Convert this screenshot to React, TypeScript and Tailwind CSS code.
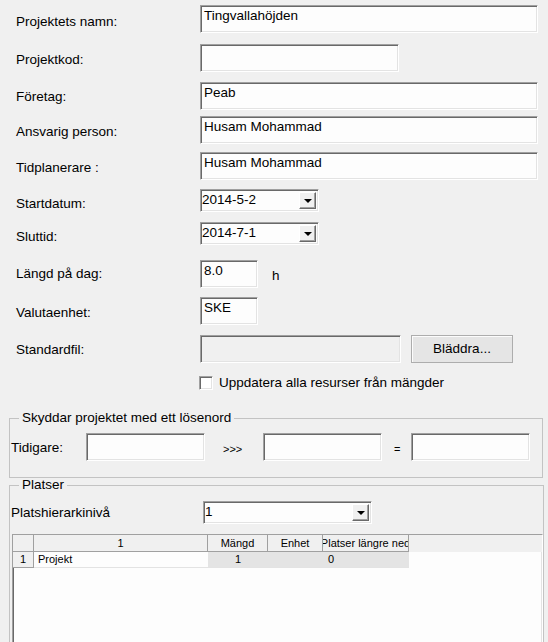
import React from 'react'

const sunken =
  'border border-t-[#a0a0a0] border-l-[#a0a0a0] border-b-white border-r-white shadow-[inset_1px_1px_0_#696969,inset_-1px_-1px_0_#e3e3e3]'

function TextBox({ w, value, disabled }: { w: string; value?: string; disabled?: boolean }) {
  return (
    <div
      className={`${w} h-[28px] shrink-0 pl-[3px] pt-[2px] leading-[16px] ${sunken} ${
        disabled ? 'bg-[#f0f0f0]' : 'bg-[#fdfdfd]'
      }`}
    >
      {value}
    </div>
  )
}

function Combo({ w, value }: { w: string; value: string }) {
  return (
    <div className={`${w} flex h-[23px] shrink-0 items-start bg-[#fdfdfd] ${sunken}`}>
      <span className="flex-1 pl-[1px] pt-[2px] leading-[16px]">{value}</span>
      <div className="mr-[2px] mt-[2px] flex h-[17px] w-[17px] items-center justify-center border border-t-white border-l-white border-b-[#696969] border-r-[#696969] bg-[#f0f0f0] shadow-[inset_-1px_-1px_0_#a0a0a0]">
        <div className="h-0 w-0 border-x-[4px] border-t-[4px] border-x-transparent border-t-black" />
      </div>
    </div>
  )
}

function Row({
  label,
  mt,
  lt,
  children,
}: {
  label: string
  mt: string
  lt: string
  children: React.ReactNode
}) {
  return (
    <div className={`flex items-start ${mt}`}>
      <span className={`w-[200px] shrink-0 pl-[16px] leading-[16px] ${lt}`}>{label}</span>
      {children}
    </div>
  )
}

export default function App() {
  return (
    <div
      className="relative h-[642px] w-[548px] overflow-hidden bg-[#f0f0f0] text-[13.5px] text-black"
      style={{ fontFamily: '"Liberation Sans", Arial, sans-serif' }}
    >
      <div className="flex flex-col">
        <Row label="Projektets namn:" mt="mt-[5px]" lt="mt-[9px]">
          <TextBox w="w-[338px]" value="Tingvallahöjden" />
        </Row>
        <Row label="Projektkod:" mt="mt-[11px]" lt="mt-[8px]">
          <TextBox w="w-[199px]" />
        </Row>
        <Row label="Företag:" mt="mt-[10px]" lt="mt-[7px]">
          <TextBox w="w-[338px]" value="Peab" />
        </Row>
        <Row label="Ansvarig person:" mt="mt-[6px]" lt="mt-[8px]">
          <TextBox w="w-[338px]" value="Husam Mohammad" />
        </Row>
        <Row label="Tidplanerare :" mt="mt-[8px]" lt="mt-[8px]">
          <TextBox w="w-[338px]" value="Husam Mohammad" />
        </Row>
        <Row label="Startdatum:" mt="mt-[9px]" lt="mt-[7px]">
          <Combo w="w-[119px]" value="2014-5-2" />
        </Row>
        <Row label="Sluttid:" mt="mt-[10px]" lt="mt-[7px]">
          <Combo w="w-[119px]" value="2014-7-1" />
        </Row>
        <Row label="Längd på dag:" mt="mt-[15px]" lt="mt-[6px]">
          <TextBox w="w-[58px]" value="8.0" />
          <span className="ml-[14px] mt-[8px] leading-[16px]">h</span>
        </Row>
        <Row label="Valutaenhet:" mt="mt-[9px]" lt="mt-[8px]">
          <TextBox w="w-[58px]" value="SKE" />
        </Row>
        <Row label="Standardfil:" mt="mt-[10px]" lt="mt-[7px]">
          <TextBox w="w-[201px]" disabled />
          <button className="ml-[10px] h-[28px] w-[102px] border border-[#adadad] bg-[#e5e5e5] leading-[16px] shadow-[inset_1px_1px_0_#fcfcfc]">
            Bläddra...
          </button>
        </Row>
        <div className="ml-[199px] mt-[12px] flex items-center">
          <div className={`h-[14px] w-[14px] bg-white ${sunken}`} />
          <span className="ml-[6px] leading-[16px]">Uppdatera alla resurser från mängder</span>
        </div>

        <fieldset className="ml-[9px] mt-[19px] h-[68px] w-[534px] border border-[#c3c3c3]">
          <legend className="ml-[9px] px-[3px] leading-[16px]">Skyddar projektet med ett lösenord</legend>
          <div className="mt-[7px] flex items-start">
            <span className="ml-[1px] mt-[7px] w-[75px] leading-[16px]">Tidigare:</span>
            <TextBox w="w-[119px]" />
            <span className="ml-[18px] mt-[8px] w-[40px] text-[11px] leading-[16px]">&gt;&gt;&gt;</span>
            <TextBox w="w-[119px]" />
            <span className="ml-[12px] mt-[8px] w-[17px] text-[11px] leading-[16px]">=</span>
            <TextBox w="w-[119px]" />
          </div>
        </fieldset>

        <fieldset className="-mt-px ml-[9px] h-[200px] w-[534px] border border-[#c3c3c3]">
          <legend className="ml-[9px] px-[3px] leading-[16px]">Platser</legend>
          <div className="mt-[8px] flex items-start">
            <span className="ml-[1px] mt-[4px] w-[192px] leading-[16px]">Platshierarkinivå</span>
            <Combo w="w-[169px]" value="1" />
          </div>
          <div className={`ml-[2px] mt-[10px] h-[140px] w-[531px] bg-[#fdfdfd] text-[11px] ${sunken}`}>
            <div className="flex h-[17px] bg-[#f0f0f0] leading-[16px]">
              <div className="w-[21px] shrink-0 border-b border-r border-[#a0a0a0]" />
              <div className="w-[174px] shrink-0 border-b border-r border-[#a0a0a0] text-center">1</div>
              <div className="w-[60px] shrink-0 border-b border-r border-[#a0a0a0] text-center">Mängd</div>
              <div className="w-[55px] shrink-0 border-b border-r border-[#a0a0a0] text-center">Enhet</div>
              <div className="flex w-[86px] shrink-0 justify-center overflow-hidden whitespace-nowrap border-b border-r border-[#a0a0a0]">
                <span className="shrink-0">Platser längre ned</span>
              </div>
            </div>
            <div className="flex h-[16px] leading-[15px]">
              <div className="w-[21px] shrink-0 border-b border-r border-[#a0a0a0] bg-[#f0f0f0] text-center">1</div>
              <div className="w-[174px] shrink-0 border-b border-[#e3e3e3] pl-[4px]">Projekt</div>
              <div className="w-[60px] shrink-0 border-b border-[#e3e3e3] bg-[#e4e4e4] text-center">1</div>
              <div className="w-[55px] shrink-0 border-b border-[#e3e3e3] bg-[#e4e4e4]" />
              <div className="w-[86px] shrink-0 border-b border-[#e3e3e3] bg-[#e4e4e4] pl-[5px]">0</div>
            </div>
          </div>
        </fieldset>
      </div>
    </div>
  )
}
